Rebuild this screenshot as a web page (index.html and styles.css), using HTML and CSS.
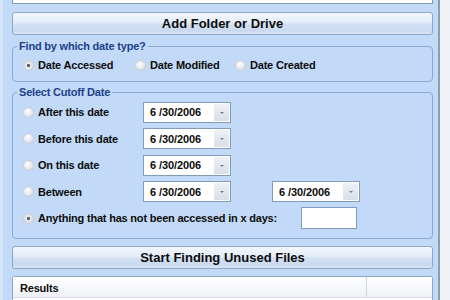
FILE: index.html
```html
<!DOCTYPE html>
<html lang="en">
<head>
    <meta charset="UTF-8">
    <title>Find Unused Files</title>
    <link rel="stylesheet" href="styles.css">
</head>
<body>
    <div class="window">
        <div class="main">
            <div class="path-box"></div>

            <button class="big-button" type="button">Add Folder or Drive</button>

            <fieldset class="group group-type">
                <legend>Find by which date type?</legend>
                <div class="type-row">
                    <label class="option opt-wide"><span class="radio checked"></span>Date Accessed</label>
                    <label class="option opt-mid"><span class="radio"></span>Date Modified</label>
                    <label class="option"><span class="radio"></span>Date Created</label>
                </div>
            </fieldset>

            <fieldset class="group group-date">
                <legend>Select Cutoff Date</legend>
                <div class="date-rows">
                    <div class="date-row">
                        <label class="option label-col"><span class="radio"></span>After this date</label>
                        <div class="picker"><span class="picker-value">6 /30/2006</span><span class="picker-drop"></span></div>
                    </div>
                    <div class="date-row">
                        <label class="option label-col"><span class="radio"></span>Before this date</label>
                        <div class="picker"><span class="picker-value">6 /30/2006</span><span class="picker-drop"></span></div>
                    </div>
                    <div class="date-row">
                        <label class="option label-col"><span class="radio"></span>On this date</label>
                        <div class="picker"><span class="picker-value">6 /30/2006</span><span class="picker-drop"></span></div>
                    </div>
                    <div class="date-row">
                        <label class="option label-col"><span class="radio"></span>Between</label>
                        <div class="picker"><span class="picker-value">6 /30/2006</span><span class="picker-drop"></span></div>
                        <div class="picker picker-second"><span class="picker-value">6 /30/2006</span><span class="picker-drop"></span></div>
                    </div>
                    <div class="date-row">
                        <label class="option days-label"><span class="radio checked"></span>Anything that has not been accessed in x days:</label>
                        <div class="days-box"></div>
                    </div>
                </div>
            </fieldset>

            <button class="big-button start-button" type="button">Start Finding Unused Files</button>

            <div class="results">
                <div class="results-head">
                    <span class="col-name">Results</span>
                    <span class="col-rest"></span>
                </div>
            </div>
        </div>
        <div class="edge"></div>
    </div>
</body>
</html>
```

FILE: styles.css
```css
body {
    margin: 0;
    padding: 0;
    background-color: #c2daf7;
    font-family: "Liberation Sans", Arial, sans-serif;
    font-size: 11px;
    font-weight: bold;
    color: #0c0c0c;
    overflow: hidden;
}
.window {
    display: flex;
    height: 300px;
    border-left: 3px solid #d3e3f8;
}
.main {
    width: 421px;
    margin-left: 9px;
    display: flex;
    flex-direction: column;
}
.edge {
    margin-left: 5px;
    width: 10px;
    border-left: 2px solid #8e9cae;
    background: #eef1f6;
}
.path-box {
    height: 3px;
    background: #fff;
    border: 1px solid #7f9db9;
    border-top: none;
}
.big-button {
    margin-top: 8px;
    height: 23px;
    padding: 0;
    font-family: "Liberation Sans", Arial, sans-serif;
    font-size: 13px;
    font-weight: bold;
    color: #0c0c0c;
    border: 1px solid #8ea7c8;
    border-radius: 3px;
    background: linear-gradient(#f3f7fd 0%, #e3ecf8 45%, #d2e0f2 55%, #c9d9ef 85%, #dbe6f5 100%);
}
.group {
    margin: 5px 0 0 0;
    padding: 0 10px;
    border: 1px solid #8aa8cf;
    border-radius: 4px;
}
.group legend {
    margin-left: -6px;
    padding: 0 2px;
    font-size: 11px;
    line-height: 12px;
    color: #21408a;
    letter-spacing: -0.2px;
}
.group-type {
    padding-top: 6px;
    padding-bottom: 9px;
}
.group-date {
    margin-top: 4px;
    padding-top: 3px;
    padding-bottom: 9px;
}
.type-row {
    display: flex;
    height: 14px;
    align-items: center;
}
.option {
    display: flex;
    align-items: center;
    gap: 4px;
    letter-spacing: -0.2px;
    white-space: nowrap;
}
.opt-wide {
    width: 112px;
}
.opt-mid {
    width: 100px;
}
.radio {
    width: 9px;
    height: 9px;
    border-radius: 50%;
    border: 1px solid #c9ced6;
    background: radial-gradient(circle at 40% 35%, #ffffff 0%, #e6e8ec 55%, #cfd3da 100%);
    flex-shrink: 0;
}
.radio.checked {
    background: radial-gradient(circle, #4a5060 0%, #6a7080 22%, #e8eaee 30%, #d0d4db 100%);
}
.date-rows {
    display: flex;
    flex-direction: column;
    gap: 4.5px;
}
.date-row {
    display: flex;
    align-items: center;
    height: 22px;
}
.label-col {
    width: 120px;
}
.picker {
    width: 86px;
    height: 19px;
    display: flex;
    align-items: center;
    background: #fff;
    border: 1px solid #7f9db9;
}
.picker-second {
    margin-left: 41px;
}
.picker-value {
    flex: 1;
    padding-left: 6px;
    letter-spacing: -0.1px;
}
.picker-drop {
    width: 15px;
    height: 17px;
    margin-right: 1px;
    background: linear-gradient(#eef1f6, #d9dee8);
    position: relative;
}
.picker-drop::after {
    content: "";
    position: absolute;
    left: 6px;
    top: 8px;
    border-left: 2px solid transparent;
    border-right: 2px solid transparent;
    border-top: 2px solid #6b7a90;
}
.days-label {
    width: 278px;
}
.days-box {
    width: 54px;
    height: 20px;
    background: #fff;
    border: 1px solid #7f9db9;
}
.start-button {
    margin-top: 7px;
}
.results {
    margin-top: 7px;
    flex: 1;
    background: #fff;
    border: 1px solid #8ea7c8;
    border-bottom: none;
    border-radius: 3px 3px 0 0;
}
.results-head {
    display: flex;
    height: 20px;
    border-bottom: 1px solid #d5dce6;
    background: linear-gradient(#ffffff, #eef1f5);
}
.col-name {
    width: 346px;
    padding-left: 7px;
    line-height: 22px;
    border-right: 1px solid #d0d6df;
    letter-spacing: -0.2px;
}
.col-rest {
    flex: 1;
}
```
